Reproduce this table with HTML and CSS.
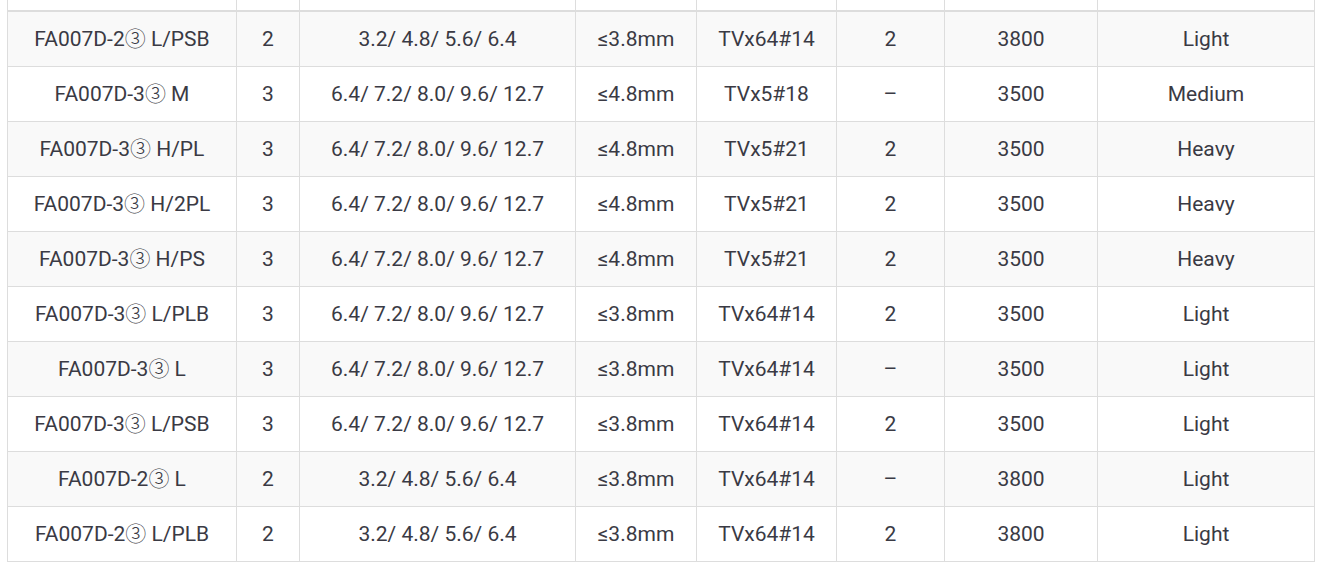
FILE: index.html
```html
<!DOCTYPE html>
<html>
<head>
<meta charset="utf-8">
<link rel="stylesheet" href="styles.css">
</head>
<body>
<div class="wrap">
<table class="spec">
<colgroup>
<col class="c1"><col class="c2"><col class="c3"><col class="c4"><col class="c5"><col class="c6"><col class="c7"><col class="c8">
</colgroup>
<thead>
<tr class="head"><th></th><th></th><th></th><th></th><th></th><th></th><th></th><th></th></tr>
</thead>
<tbody>
<tr><td>FA007D-2<span class="circ">③</span> L/PSB</td><td>2</td><td>3.2/ 4.8/ 5.6/ 6.4</td><td>≤3.8mm</td><td>TVx64#14</td><td>2</td><td>3800</td><td>Light</td></tr>
<tr><td>FA007D-3<span class="circ">③</span> M</td><td>3</td><td>6.4/ 7.2/ 8.0/ 9.6/ 12.7</td><td>≤4.8mm</td><td>TVx5#18</td><td>–</td><td>3500</td><td>Medium</td></tr>
<tr><td>FA007D-3<span class="circ">③</span> H/PL</td><td>3</td><td>6.4/ 7.2/ 8.0/ 9.6/ 12.7</td><td>≤4.8mm</td><td>TVx5#21</td><td>2</td><td>3500</td><td>Heavy</td></tr>
<tr><td>FA007D-3<span class="circ">③</span> H/2PL</td><td>3</td><td>6.4/ 7.2/ 8.0/ 9.6/ 12.7</td><td>≤4.8mm</td><td>TVx5#21</td><td>2</td><td>3500</td><td>Heavy</td></tr>
<tr><td>FA007D-3<span class="circ">③</span> H/PS</td><td>3</td><td>6.4/ 7.2/ 8.0/ 9.6/ 12.7</td><td>≤4.8mm</td><td>TVx5#21</td><td>2</td><td>3500</td><td>Heavy</td></tr>
<tr><td>FA007D-3<span class="circ">③</span> L/PLB</td><td>3</td><td>6.4/ 7.2/ 8.0/ 9.6/ 12.7</td><td>≤3.8mm</td><td>TVx64#14</td><td>2</td><td>3500</td><td>Light</td></tr>
<tr><td>FA007D-3<span class="circ">③</span> L</td><td>3</td><td>6.4/ 7.2/ 8.0/ 9.6/ 12.7</td><td>≤3.8mm</td><td>TVx64#14</td><td>–</td><td>3500</td><td>Light</td></tr>
<tr><td>FA007D-3<span class="circ">③</span> L/PSB</td><td>3</td><td>6.4/ 7.2/ 8.0/ 9.6/ 12.7</td><td>≤3.8mm</td><td>TVx64#14</td><td>2</td><td>3500</td><td>Light</td></tr>
<tr><td>FA007D-2<span class="circ">③</span> L</td><td>2</td><td>3.2/ 4.8/ 5.6/ 6.4</td><td>≤3.8mm</td><td>TVx64#14</td><td>–</td><td>3800</td><td>Light</td></tr>
<tr><td>FA007D-2<span class="circ">③</span> L/PLB</td><td>2</td><td>3.2/ 4.8/ 5.6/ 6.4</td><td>≤3.8mm</td><td>TVx64#14</td><td>2</td><td>3800</td><td>Light</td></tr>
</tbody>
</table>
</div>
</body>
</html>
```
FILE: styles.css
```css
html, body {
  margin: 0;
  padding: 0;
  background: #fff;
}
.wrap {
  padding: 0 11px 0 7px;
}
.spec {
  border-collapse: collapse;
  table-layout: fixed;
  width: 1307px;
  font-family: Roboto, "Noto Sans CJK KR", sans-serif;
  font-size: 21px;
  color: #3a3a44;
}
.c1 { width: 229px; }
.c2 { width: 63px; }
.c3 { width: 276px; }
.c4 { width: 121px; }
.c5 { width: 140px; }
.c6 { width: 108px; }
.c7 { width: 153px; }
.c8 { width: 217px; }
.spec th {
  height: 10px;
  padding: 0;
  border-left: 1px solid #ddd;
  border-right: 1px solid #ddd;
  border-bottom: 2px solid #ddd;
}
.spec td {
  height: 55px;
  padding: 0 4px;
  box-sizing: border-box;
  border: 1px solid #ddd;
  text-align: center;
  vertical-align: middle;
  white-space: nowrap;
}
.circ {
  font-family: "Noto Sans CJK KR", sans-serif;
  font-weight: 300;
  line-height: 0;
}
.spec tbody tr:nth-child(odd) {
  background: #f9f9f9;
}
```
